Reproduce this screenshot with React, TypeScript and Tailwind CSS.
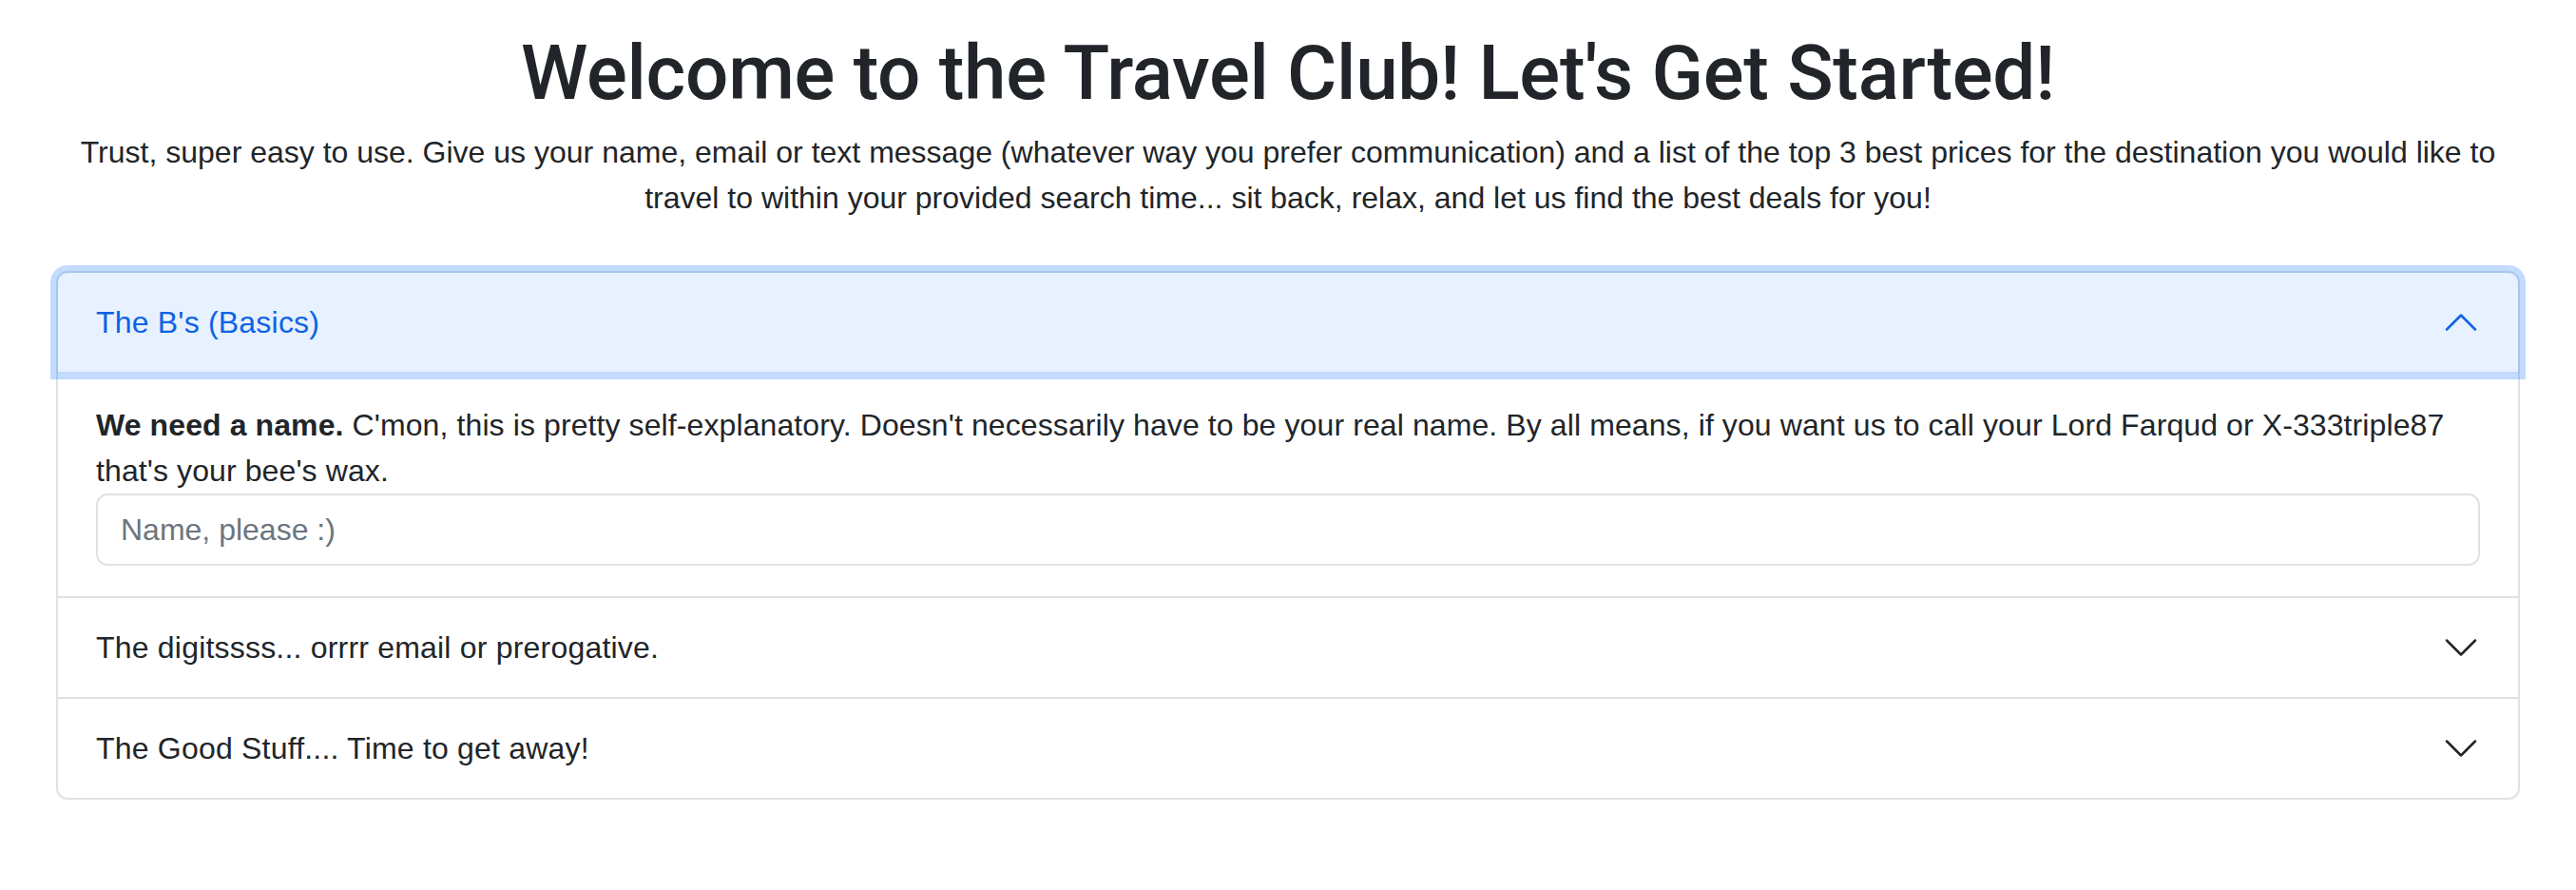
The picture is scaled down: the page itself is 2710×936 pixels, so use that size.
function Chevron({ up, className }: { up?: boolean; className?: string }) {
  return (
    <svg
      viewBox="0 0 16 16"
      className={className}
      fill="none"
      stroke="currentColor"
      strokeLinecap="round"
      strokeLinejoin="round"
    >
      <path d={up ? 'M2 11L8 5L14 11' : 'M2 5L8 11L14 5'} />
    </svg>
  );
}

function CollapsedItem({ title }: { title: string }) {
  return (
    <div className="border-t-2 border-[#dee2e6]">
      <button className="flex h-[104px] w-full items-center justify-between px-10 text-left text-[32px] tracking-[0.2px] text-[#212529]">
        <span>{title}</span>
        <Chevron className="h-10 w-10 shrink-0" />
      </button>
    </div>
  );
}

export default function App() {
  return (
    <div className="min-h-screen bg-white font-['Liberation_Sans','Roboto',sans-serif] text-[#212529]">
      <div className="mx-auto max-w-[2640px] px-6 pt-6">
        {/* Heading */}
        <h1 className="pt-[5px] text-center font-['Roboto','Liberation_Sans',sans-serif] text-[80px] font-medium leading-[96px] tracking-[-0.3px]">
          Welcome to the Travel Club! Let's Get Started!
        </h1>
        <p className="mt-[11px] text-center text-[32px] leading-[48px]">
          Trust, super easy to use. Give us your name, email or text message (whatever way you prefer communication) and a list of the top 3 best prices for the destination you would like to travel to within your provided search time... sit back, relax, and let us find the best deals for you!
        </p>

        {/* Accordion */}
        <div className="mt-[53px] rounded-[12px] border-2 border-[#dee2e6] bg-white">
          <div>
            <button className="relative z-10 flex h-[104px] w-full items-center justify-between rounded-t-[10px] bg-[#e7f1ff] px-10 text-left text-[32px] tracking-[0.2px] text-[#0c63e4] shadow-[0_0_0_8px_rgba(13,110,253,0.25)]">
              <span>The B's (Basics)</span>
              <Chevron up className="h-10 w-10 shrink-0" />
            </button>
            <div className="px-10 py-8 text-[32px] leading-[48px]">
              <p className="tracking-[0.1px]">
                <strong className="font-bold">We need a name.</strong> C'mon, this is pretty self-explanatory. Doesn't necessarily have to be your real name. By all means, if you want us to call your Lord Farqud or X-333triple87 that's your bee's wax.
              </p>
              <input
                type="text"
                placeholder="Name, please :)"
                className="block h-[76px] w-full rounded-[12px] border-2 border-[#dee2e6] px-6 text-[32px] text-[#212529] outline-none placeholder:text-[#6c757d]"
              />
            </div>
          </div>
          <CollapsedItem title="The digitssss... orrrr email or prerogative." />
          <CollapsedItem title="The Good Stuff.... Time to get away!" />
        </div>
      </div>
    </div>
  );
}
